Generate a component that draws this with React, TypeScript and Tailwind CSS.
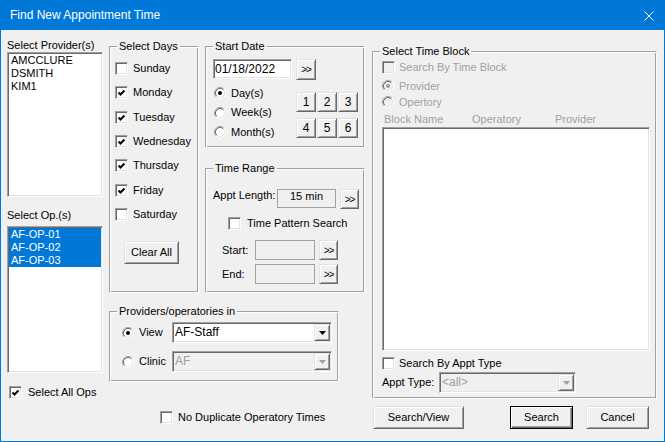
import React from "react";

const SUNKEN =
  "border border-t-[#a0a0a0] border-l-[#a0a0a0] border-b-white border-r-white shadow-[inset_1px_1px_0_#696969,inset_-1px_-1px_0_#e3e3e3]";
const RAISED =
  "border border-t-[#e3e3e3] border-l-[#e3e3e3] border-b-[#696969] border-r-[#696969] shadow-[inset_1px_1px_0_#fff,inset_-1px_-1px_0_#a0a0a0] bg-[#f0f0f0]";
const DEFAULT_BTN =
  "border border-black shadow-[inset_1px_1px_0_#fff,inset_-1px_-1px_0_#696969,inset_-2px_-2px_0_#a0a0a0] bg-[#f0f0f0]";
const ETCHED =
  "border border-t-[#a0a0a0] border-l-[#a0a0a0] border-b-white border-r-white shadow-[inset_1px_1px_0_#fff,inset_-1px_-1px_0_#a0a0a0]";

const CheckBox = ({ checked = false, disabled = false }) => (
  <span
    className={`flex h-[13px] w-[13px] shrink-0 items-center justify-center ${SUNKEN} ${
      disabled ? "bg-[#f0f0f0]" : "bg-white"
    }`}
  >
    {checked && (
      <svg width="9" height="9" viewBox="0 0 9 9">
        <path d="M1.5 4.5L3.5 6.5L7.5 2.5" fill="none" stroke="#000" strokeWidth="2" />
      </svg>
    )}
  </span>
);

const Radio = ({ checked = false, disabled = false }) => (
  <svg width="12" height="12" viewBox="0 0 12 12" className="shrink-0">
    <circle cx="6" cy="6" r="4.5" fill={disabled ? "#f0f0f0" : "#fff"} />
    <path d="M2.11 9.89A5.5 5.5 0 0 1 9.89 2.11" fill="none" stroke="#a0a0a0" />
    <path d="M9.89 2.11A5.5 5.5 0 0 1 2.11 9.89" fill="none" stroke="#fff" />
    <path d="M2.82 9.18A4.5 4.5 0 0 1 9.18 2.82" fill="none" stroke="#696969" />
    <path d="M9.18 2.82A4.5 4.5 0 0 1 2.82 9.18" fill="none" stroke="#e3e3e3" />
    {checked && <circle cx="6" cy="6" r="2" fill={disabled ? "#a0a0a0" : "#000"} />}
  </svg>
);

const Btn = ({
  className = "",
  children,
  isDefault = false,
}: {
  className?: string;
  children: React.ReactNode;
  isDefault?: boolean;
}) => (
  <div
    className={`flex shrink-0 items-center justify-center ${isDefault ? DEFAULT_BTN : RAISED} ${className}`}
  >
    {children}
  </div>
);

const Arrows = () => <span className="text-[10px] tracking-[-1px]">&gt;&gt;</span>;

const Combo = ({
  value,
  disabled = false,
  className = "",
}: {
  value: string;
  disabled?: boolean;
  className?: string;
}) => (
  <div
    className={`flex p-[1px] ${SUNKEN} ${
      disabled ? "bg-[#f0f0f0] text-[#a0a0a0]" : "bg-white"
    } ${className}`}
  >
    <span className="flex flex-1 items-center pl-[1px] text-[12px]">{value}</span>
    <span className={`flex w-[16px] items-center justify-center ${RAISED}`}>
      <svg width="7" height="4" viewBox="0 0 7 4">
        <path d="M0 0H7L3.5 4Z" fill={disabled ? "#a0a0a0" : "#000"} />
      </svg>
    </span>
  </div>
);

const Group = ({
  title,
  className = "",
  children,
}: {
  title: string;
  className?: string;
  children: React.ReactNode;
}) => (
  <div className={`relative shrink-0 ${ETCHED} ${className}`}>
    <span className="absolute -top-[7px] left-[7px] bg-[#f0f0f0] px-[2px]">{title}</span>
    {children}
  </div>
);

const days: [string, boolean][] = [
  ["Sunday", false],
  ["Monday", true],
  ["Tuesday", true],
  ["Wednesday", true],
  ["Thursday", true],
  ["Friday", true],
  ["Saturday", false],
];

export default function App() {
  return (
    <div className="flex h-[442px] w-[665px] select-none flex-col overflow-hidden border border-[#0078d7] bg-[#f0f0f0] font-['Liberation_Sans',Arial,sans-serif] text-[11px] leading-[13px] text-black">
      <div className="flex h-[29px] shrink-0 items-center justify-between bg-[#0078d7] pl-[9px] pr-[10px] text-[12px] text-white">
        <span className="font-['Segoe_UI','Liberation_Sans',sans-serif]">Find New Appointment Time</span>
        <svg width="10" height="10" viewBox="0 0 10 10">
          <path d="M0.5 0.5L9.5 9.5M9.5 0.5L0.5 9.5" stroke="#fff" strokeWidth="1" />
        </svg>
      </div>

      <div className="flex flex-1 items-start pl-[6px]">
        {/* providers / ops */}
        <div className="flex w-[96px] shrink-0 flex-col">
          <div className="mt-[9px]">Select Provider(s)</div>
          <div className={`h-[145px] bg-white p-[1px] pl-[3px] ${SUNKEN}`}>
            <div>AMCCLURE</div>
            <div>DSMITH</div>
            <div>KIM1</div>
          </div>
          <div className="mt-[12px]">Select Op.(s)</div>
          <div className={`mt-[4px] h-[147px] bg-white p-[1px] ${SUNKEN}`}>
            {["AF-OP-01", "AF-OP-02", "AF-OP-03"].map((op) => (
              <div key={op} className="bg-[#0078d7] pl-[2px] text-white">
                {op}
              </div>
            ))}
          </div>
          <div className="ml-[2px] mt-[13px] flex items-center gap-[6px]">
            <CheckBox checked />
            <span>Select All Ops</span>
          </div>
        </div>

        {/* middle */}
        <div className="ml-[6px] flex w-[256px] shrink-0 flex-col">
          <div className="mt-[16px] flex">
            <Group title="Select Days" className="h-[247px] w-[90px]">
              <div className="flex flex-col gap-[11.33px] pl-[5px] pt-[15px]">
                {days.map(([d, c]) => (
                  <div key={d} className="flex h-[13px] items-center gap-[5px]">
                    <CheckBox checked={c} />
                    <span>{d}</span>
                  </div>
                ))}
              </div>
              <Btn className="ml-[14px] mt-[20px] h-[23px] w-[55px]">Clear All</Btn>
            </Group>

            <div className="ml-[6px] flex w-[160px] flex-col">
              <Group title="Start Date" className="h-[102px] w-[160px]">
                <div className="ml-[7px] mt-[12px] flex gap-[4px]">
                  <div className={`flex h-[20px] w-[79px] items-center bg-white pl-[1px] text-[12px] ${SUNKEN}`}>
                    01/18/2022
                  </div>
                  <Btn className="h-[21px] w-[20px]">
                    <Arrows />
                  </Btn>
                </div>
                <div className="flex">
                  <div className="ml-[8px] mt-[7px] flex flex-col gap-[7.5px]">
                    {[
                      ["Day(s)", true],
                      ["Week(s)", false],
                      ["Month(s)", false],
                    ].map(([l, c]) => (
                      <div key={l as string} className="flex h-[12px] items-center gap-[5px]">
                        <Radio checked={c as boolean} />
                        <span>{l}</span>
                      </div>
                    ))}
                  </div>
                  <div className="ml-auto mr-[6px] mt-[12px] grid grid-cols-[20px_20px_20px] gap-x-[1px] gap-y-[6px]">
                    {["1", "2", "3", "4", "5", "6"].map((n) => (
                      <Btn key={n} className="h-[20px] w-[20px] text-[12px]">
                        {n}
                      </Btn>
                    ))}
                  </div>
                </div>
              </Group>

              <Group title="Time Range" className="mt-[20px] h-[125px] w-[160px]">
                <div className="ml-[7px] mt-[20px] flex items-start">
                  <span className="w-[64px]">Appt Length:</span>
                  <div className="h-[19px] w-[59px] border border-[#a0a0a0] text-center">15 min</div>
                  <Btn className="ml-[4px] h-[20px] w-[19px]">
                    <Arrows />
                  </Btn>
                </div>
                <div className="ml-[22px] mt-[8px] flex items-center gap-[6px]">
                  <CheckBox />
                  <span>Time Pattern Search</span>
                </div>
                <div className="mt-[10px] flex items-center">
                  <span className="ml-[16px] w-[33px]">Start:</span>
                  <div className="h-[20px] w-[60px] border border-[#a0a0a0]" />
                  <Btn className="ml-[4px] h-[20px] w-[19px]">
                    <Arrows />
                  </Btn>
                </div>
                <div className="mt-[4px] flex items-center">
                  <span className="ml-[16px] w-[33px]">End:</span>
                  <div className="h-[20px] w-[60px] border border-[#a0a0a0]" />
                  <Btn className="ml-[4px] h-[20px] w-[19px]">
                    <Arrows />
                  </Btn>
                </div>
              </Group>
            </div>
          </div>

          <Group title="Providers/operatories in" className="mt-[18px] h-[71px] w-[230px]">
            <div className="mt-[10px] flex items-center">
              <span className="ml-[12px]">
                <Radio checked />
              </span>
              <span className="ml-[5px] w-[33px]">View</span>
              <Combo value="AF-Staff" className="h-[21px] w-[160px]" />
            </div>
            <div className="mt-[8px] flex items-center">
              <span className="ml-[12px]">
                <Radio />
              </span>
              <span className="ml-[5px] w-[33px]">Clinic</span>
              <Combo value="AF" disabled className="h-[21px] w-[160px]" />
            </div>
          </Group>

          <div className="ml-[51px] mt-[29px] flex items-center gap-[5px]">
            <CheckBox />
            <span>No Duplicate Operatory Times</span>
          </div>
        </div>

        {/* time block */}
        <div className="ml-[7px] flex w-[285px] shrink-0 flex-col">
          <Group title="Select Time Block" className="mt-[21px] h-[348px] w-[285px]">
            <div className="ml-[9px] mt-[9px] flex items-center gap-[4px] text-[#a0a0a0]">
              <CheckBox disabled />
              <span>Search By Time Block</span>
            </div>
            <div className="ml-[9px] mt-[6px] flex h-[12px] items-center gap-[5px] text-[#a0a0a0]">
              <Radio checked disabled />
              <span>Provider</span>
            </div>
            <div className="ml-[9px] mt-[4px] flex h-[12px] items-center gap-[5px] text-[#a0a0a0]">
              <Radio disabled />
              <span>Opertory</span>
            </div>
            <div className="ml-[11px] mt-[5px] flex text-[#a0a0a0]">
              <span className="w-[88px]">Block Name</span>
              <span className="w-[83px]">Operatory</span>
              <span>Provider</span>
            </div>
            <div className={`ml-[9px] mt-[1px] h-[224px] w-[268px] bg-white ${SUNKEN}`} />
            <div className="ml-[9px] mt-[6px] flex items-center gap-[4px]">
              <CheckBox />
              <span>Search By Appt Type</span>
            </div>
            <div className="ml-[9px] mt-[2px] flex items-center">
              <span className="w-[57px]">Appt Type:</span>
              <Combo value="<all>" disabled className="h-[21px] w-[137px]" />
            </div>
          </Group>
          <div className="mt-[7px] flex">
            <Btn className="ml-[1px] h-[23px] w-[91px]">Search/View</Btn>
            <Btn isDefault className="ml-[46px] h-[23px] w-[63px]">
              Search
            </Btn>
            <Btn className="ml-[13px] h-[23px] w-[63px]">Cancel</Btn>
          </div>
        </div>
      </div>
    </div>
  );
}
